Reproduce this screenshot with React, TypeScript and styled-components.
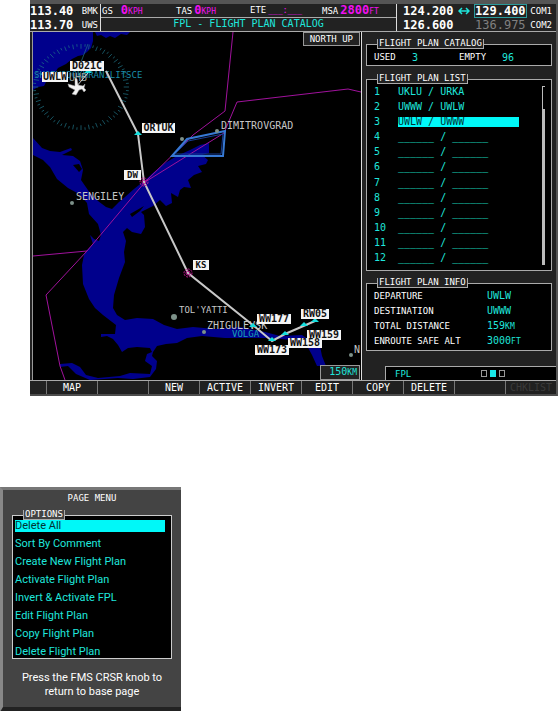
import React, { Fragment, useState } from "react";
import styled, { createGlobalStyle } from "styled-components";

const mono = `"DejaVu Sans Mono", "Liberation Mono", monospace`;
const cyan = "#1fe6dc";
const magenta = "#f010f0";

const GlobalStyle = createGlobalStyle`
  *, *::before, *::after { box-sizing: border-box; }
  body { margin: 0; background: #fff; font-family: ${mono}; }
  button { font: inherit; border: 0; padding: 0; margin: 0; cursor: pointer; }
`;

const Page = styled.main`
  display: flex;
  flex-direction: column;
  gap: 91px;
`;

const Device = styled.section`
  margin-left: 30px;
  border-top: 4px solid #555;
  border-right: 2px solid #555;
  border-bottom: 2px solid #4c4c4c;
  background: #222;
  color: #fff;
`;

const Header = styled.header`
  display: grid;
  grid-template-columns: 70px minmax(0, 1fr) 159px;
  height: 28px;
  border-bottom: 1px solid #aaa;
`;

const RadioBlock = styled.div`
  display: grid;
  grid-template-rows: 14px 13px;
  white-space: pre;
`;

const RadioRow = styled.div<{ $com?: boolean }>`
  display: flex;
  align-items: center;
  justify-content: space-between;
  padding: ${(p) => (p.$com ? "0 4px 0 6px" : "0 2px 0 0")};
`;

const Frequency = styled.span<{ $dim?: boolean; $boxed?: boolean }>`
  font-size: 12px;
  font-weight: ${(p) => (p.$dim ? 400 : 700)};
  line-height: 12px;
  color: ${(p) => (p.$dim ? "#808080" : "#fff")};
  outline: ${(p) => (p.$boxed ? "1px solid #2a9a9a" : "0")};
`;

const Station = styled.span`
  font-size: 9px;
`;

const SwapIcon = styled.svg`
  width: 12px;
  height: 8px;
`;

const StatusBlock = styled.div`
  display: grid;
  grid-template-rows: 14px 13px;
  border-left: 1px solid #ddd;
  border-right: 1px solid #ddd;
`;

const DataBar = styled.div`
  display: grid;
  grid-template-columns: 74px 74px 72px 1fr;
  padding-left: 1px;
  border-bottom: 1px solid #aaa;
`;

const Datum = styled.span<{ $wide?: boolean }>`
  display: flex;
  align-items: baseline;
  gap: ${(p) => (p.$wide ? 8 : 2)}px;
  font-size: 9px;
  line-height: 13px;
  white-space: nowrap;
`;

const Reading = styled.span`
  color: ${magenta};
  font-size: 8px;
`;

const Big = styled.span`
  font-size: 12px;
  font-weight: 700;
`;

const Title = styled.h1`
  margin: 0;
  font-size: 10px;
  font-weight: 400;
  line-height: 12px;
  text-align: center;
  color: ${cyan};
`;

const Body = styled.div`
  display: flex;
  min-height: 348px;
`;

const MapPane = styled.div`
  position: relative;
  flex: 1;
  min-width: 0;
  margin-left: 2px;
  border-left: 1px solid #999;
  border-right: 1px solid #ddd;
  background: #000;
`;

const MapDrawing = styled.svg`
  display: block;
  width: 100%;
  height: 348px;
  font-family: ${mono};
`;

const MapTag = styled.div<{ $corner: "top" | "bottom" }>`
  position: absolute;
  right: 1px;
  ${(p) => p.$corner}: 0;
  padding: ${(p) => (p.$corner === "top" ? "0 6px" : "0 2px 0 8px")};
  border: 1px solid #999;
  background: #222;
  color: ${(p) => (p.$corner === "top" ? "#fff" : cyan)};
  font-size: ${(p) => (p.$corner === "top" ? 9 : 10)}px;
  line-height: 12px;
`;

const Small = styled.small`
  font-size: 8px;
`;

const Side = styled.aside`
  display: flex;
  flex-direction: column;
  flex: 0 0 194px;
  padding-top: 7px;
`;

const Group = styled.fieldset<{ $gap?: number }>`
  margin: 0 4px ${(p) => p.$gap ?? 0}px;
  padding: 0 3px 0 7px;
  border: 1px solid #aaa;
  background: #000;
  min-width: 0;
`;

const Legend = styled.legend`
  margin-left: 3px;
  padding: 0 1px;
  border: 1px solid #aaa;
  border-top: 0;
  background: #222;
  font-size: 9px;
  line-height: 9px;
`;

const Counts = styled.dl`
  display: grid;
  grid-template-columns: 38px 47px 43px 1fr;
  align-items: center;
  margin: 0;
  height: 16px;
  font-size: 9px;
`;

const Info = styled.dl`
  display: grid;
  grid-template-columns: 113px 1fr;
  align-items: center;
  margin: 0;
  padding-bottom: 2px;
  grid-auto-rows: 15px;
  font-size: 9px;
  white-space: nowrap;
`;

const Value = styled.dd`
  margin: 0;
  color: ${cyan};
  font-size: 10px;
`;

const ListArea = styled.div`
  display: flex;
  justify-content: space-between;
  padding-bottom: 4px;
`;

const PlanTable = styled.table`
  width: 145px;
  height: 182px;
  border-collapse: collapse;
  color: ${cyan};
  font-size: 10px;
  line-height: 10px;

  th { width: 24px; padding: 0; font-weight: 400; text-align: left; }
  td { padding: 0; white-space: pre; }
`;

const PlanName = styled.span<{ $active: boolean }>`
  display: block;
  background: ${(p) => (p.$active ? "#00f8f8" : "transparent")};
  color: ${(p) => (p.$active ? "#033" : "inherit")};
`;

const ScrollTrack = styled.div`
  width: 3px;
  margin: 2px 3px 1px 0;
  padding-top: 22px;
  border-top: 1px solid #bbb;
  border-left: 1px solid #bbb;
`;

const ScrollThumb = styled.div`
  height: 100%;
  background: #bbb;
`;

const PageTab = styled.div`
  display: flex;
  align-items: center;
  margin: auto 0 0 23px;
  height: 14px;
  padding-left: 9px;
  border: 1px solid #aaa;
  border-right: 0;
  border-bottom: 0;
  background: #000;
  color: ${cyan};
  font-size: 9px;
`;

const Dots = styled.div`
  display: flex;
  gap: 3px;
  margin-left: 70px;
`;

const Dot = styled.span<{ $on?: boolean }>`
  width: 6px;
  height: 7px;
  border: 1px solid ${(p) => (p.$on ? "#19e8e8" : "#999")};
  background: ${(p) => (p.$on ? "#19e8e8" : "transparent")};
`;

const Softkeys = styled.nav`
  display: grid;
  grid-template-columns: 16px repeat(10, minmax(0, 1fr));
  height: 14px;
  border-top: 1px solid #aaa;
`;

const Softkey = styled.button`
  border-left: 1px solid #777;
  background: #202020;
  color: #fff;
  font-size: 10px;
  line-height: 12px;

  &:disabled { color: #3a3a3a; }
`;

const Menu = styled.section`
  width: 100%;
  max-width: 181px;
  padding: 3px 9px 8px;
  border-top: 3px solid #777;
  border-left: 3px solid #888;
  border-bottom: 5px solid #222;
  background: #444;
  color: #fff;
`;

const MenuTitle = styled.h2`
  margin: 0 0 7px;
  font-size: 9px;
  font-weight: 400;
  line-height: 10px;
  text-align: center;
`;

const Options = styled.fieldset`
  margin: 0;
  padding: 0 6px 0 2px;
  border: 1px solid #ccc;
  background: #000;
  min-width: 0;
`;

const OptionsLegend = styled(Legend)`
  margin-left: 8px;
  background: #444;
`;

const OptionList = styled.div`
  display: flex;
  flex-direction: column;
  gap: 6px;
`;

const Option = styled.button<{ $active: boolean }>`
  background: ${(p) => (p.$active ? "#00f8f8" : "transparent")};
  color: ${(p) => (p.$active ? "#033" : cyan)};
  font-family: Roboto, "Liberation Sans", sans-serif;
  font-size: 11px;
  line-height: 12px;
  text-align: left;
`;

const Hint = styled.p`
  margin: 12px 0 0;
  font-family: Roboto, "Liberation Sans", sans-serif;
  font-size: 11px;
  line-height: 14px;
  text-align: center;
`;

const blank = "______ / ______";
const plans = ["UKLU / URKA", "UWWW / UWLW", "UWLW / UWWW", ...Array<string>(9).fill(blank)];
const softkeys = ["MAP", "", "NEW", "ACTIVE", "INVERT", "EDIT", "COPY", "DELETE", "", "CHKLIST"];
const options = [
  "Delete All",
  "Sort By Comment",
  "Create New Flight Plan",
  "Activate Flight Plan",
  "Invert & Activate FPL",
  "Edit Flight Plan",
  "Copy Flight Plan",
  "Delete Flight Plan",
];
const info: [string, string, string][] = [
  ["DEPARTURE", "UWLW", ""],
  ["DESTINATION", "UWWW", ""],
  ["TOTAL DISTANCE", "159", "KM"],
  ["ENROUTE SAFE ALT", "3000", "FT"],
];

const waypoints = [
  { name: "D021C", x: 70, y: 61, w: 34 },
  { name: "UWLW", x: 42, y: 72, w: 26 },
  { name: "ORTUK", x: 142, y: 123, w: 33 },
  { name: "DW", x: 124, y: 170, w: 17 },
  { name: "KS", x: 193, y: 260, w: 16 },
  { name: "WW177", x: 257, y: 314, w: 34 },
  { name: "RW05", x: 301, y: 309, w: 28 },
  { name: "WW159", x: 307, y: 330, w: 34 },
  { name: "WW158", x: 288, y: 338, w: 34 },
  { name: "WW173", x: 255, y: 345, w: 34 },
];
const cities = [
  { name: "DIMITROVGRAD", x: 221, y: 129, cx: 217, cy: 131, r: 2 },
  { name: "SENGILEY", x: 76, y: 200, cx: 72, cy: 203, r: 2 },
  { name: "TOL'YATTI", x: 179, y: 313, cx: 174, cy: 317, r: 3 },
  { name: "ZHIGULEVSK", x: 207, y: 329, cx: 204, cy: 332, r: 2 },
  { name: "N", x: 354, y: 353, cx: 351, cy: 355, r: 2 },
];
const fixes = [[88, 72], [138, 134], [253, 326], [272, 340], [285, 334], [304, 325], [315, 321]];
const compassTicks = Array.from({ length: 72 }, (_, i) => {
  const a = (i * Math.PI) / 36;
  const inner = i % 2 ? 0.94 : 0.89;
  return `M${81 + 48 * Math.cos(a)} ${87 + 43 * Math.sin(a)}L${81 + 48 * inner * Math.cos(a)} ${87 + 43 * inner * Math.sin(a)}`;
}).join("");

function MovingMap() {
  return (
    <MapDrawing viewBox="33 32 328 348" preserveAspectRatio="xMidYMid slice" role="img" aria-label="Flight plan map">
      <g fill="#00008c">
        <path d="M33 32H93V41L91 48 87 52 83 55 78 56 72 59 66 64 58 68 54 74 47 80 44 86 38 87 33 90Z" />
        <path d="M95 32H130L127 35 121 34 115 38 110 36 106 38 101 35 97 36Z" />
        <path
          fillRule="evenodd"
          d="M33 138L42 148 50 151 60 152 71 148 72 150 62 155 73 156 80 161 83 170 81 180 90 193 98 201 106 207 112 209 119 202 125 197 134 189 144 181 154 172 165 163 177 156 190 150 200 145 209 143V153L202 155 208 160 206 164 198 166 202 172 194 175 188 180 191 188 184 187 180 190 178 197 171 193 172 203 166 206 160 200 153 206 141 212 144 215 145 227 141 234 132 232 127 228 123 232 126 241 124 252 125 262 119 278 114 295 113 308 117 315 125 320 137 318 153 319 164 325 177 329 193 327 215 329 240 327 265 332 280 336 302 335 312 342 320 346 322 356 326 366H317L312 355 306 344 292 340 270 338 245 338 225 338 202 336 187 338 177 343 166 344 157 346 153 352 152 356 157 361 156 369 150 377 133 379 118 378 90 380 76 374 68 366 60 367V364L72 363 80 367 86 375 98 378 120 376 130 373 150 374 152 366 145 361 147 354 152 352 150 348 137 347 128 348 122 352 118 345 113 339 107 336 101 337V334L115 334 116 325 103 315 95 308 89 299 83 284 82 265 84 255 87 250 93 244 90 235 94 239 99 241 101 235 98 224 89 214 87 203 79 194 68 188 57 179 50 167 43 160 33 155ZM73 165L79 172 82 169 79 164ZM130 214L144 206 140 211 132 217Z"
        />
      </g>
      <g fill="none" stroke="#1f7486" strokeWidth="1">
        <path d={compassTicks} strokeWidth=".7" />
        <path d="M81 62L88 44" strokeWidth=".7" />
      </g>
      <text x="34" y="78" fontSize="9" fill="#198aa9">SKOEVODOKHRANILITSCE</text>
      <text x="232" y="337" fontSize="9" fill="#17a1b4">VOLGA</text>
      <g fill="none" stroke="#a0129c" strokeWidth="1">
        <path d="M233 32L225 111 193 135 145 182 87 251 46 295 60 366 65 380" />
        <path d="M33 256L87 251M145 182L224 133 237 102 348 89 361 92" />
      </g>
      <path d="M172 156L187 139 225 131 223 156Z" fill="none" stroke="#3679d4" strokeWidth="2" />
      <path d="M175 154L188 141 223 134 221 154Z" fill="none" stroke="#173b91" strokeWidth="1" />
      {cities.map((c) => (
        <Fragment key={c.name}>
          <circle cx={c.cx} cy={c.cy} r={c.r} fill="#7d9189" />
          <text x={c.x} y={c.y} fontSize={c.name === "TOL'YATTI" ? 9 : 10} fill="#c6c6c6">{c.name}</text>
        </Fragment>
      ))}
      <circle cx="182" cy="139" r="2" fill="#7d9189" />
      <text x="69" y="81" fontSize="10" fill="#9ba5a3">UHB</text>
      <path d="M106 71L138 134 144 182 188 273 254 326 272 341 285 334 315 321" fill="none" stroke="#c8c8c8" strokeWidth="2" />
      <path d="M76 87L88 73" stroke="#d0d0d0" strokeWidth="1" />
      {fixes.map(([x, y]) => (
        <path key={x} d={`M${x - 4} ${y + 1}L${x} ${y - 3} ${x + 4} ${y + 1}Z`} fill="#15dede" />
      ))}
      {[[144, 182], [188, 273]].map(([x, y]) => (
        <g key={x} fill="none" stroke="#c0158f">
          <circle cx={x} cy={y} r="4" strokeDasharray="2 1" />
          <circle cx={x} cy={y} r="2" />
        </g>
      ))}
      <path d="M75 78L77 79 78 85 83 86 85 84 84 88 86 90 84 92 82 89 79 90 76 95 72 94 75 90 69 87 68 84 75 86Z" fill="#f2f2f2" stroke="#a9a9a9" strokeWidth=".5" />
      {waypoints.map((w) => (
        <g key={w.name}>
          <rect x={w.x} y={w.y} width={w.w} height="10" fill="#f5f5f5" />
          <text x={w.x + w.w / 2} y={w.y + 8} fontSize={w.w > 17 ? 10 : 9} fontWeight="700" textAnchor="middle" fill="#111">{w.name}</text>
        </g>
      ))}
    </MapDrawing>
  );
}

export default function App() {
  const [option, setOption] = useState(0);
  return (
    <>
      <GlobalStyle />
      <Page>
        <Device>
          <Header>
            <RadioBlock>
              <RadioRow><Frequency>113.40</Frequency><Station>BMK</Station></RadioRow>
              <RadioRow><Frequency>113.70</Frequency><Station>UWS</Station></RadioRow>
            </RadioBlock>
            <StatusBlock>
              <DataBar>
                <Datum $wide>GS<Reading><Big>0</Big>KPH</Reading></Datum>
                <Datum>TAS<Reading><Big>0</Big>KPH</Reading></Datum>
                <Datum>ETE<Reading>___:___</Reading></Datum>
                <Datum>MSA<Reading><Big>2800</Big>FT</Reading></Datum>
              </DataBar>
              <Title>FPL - FLIGHT PLAN CATALOG</Title>
            </StatusBlock>
            <RadioBlock>
              <RadioRow $com>
                <Frequency>124.200</Frequency>
                <SwapIcon viewBox="0 0 12 8" aria-hidden="true">
                  <path d="M1 4H11M4 1L1 4 4 7M8 1L11 4 8 7" fill="none" stroke={cyan} strokeWidth="1.5" />
                </SwapIcon>
                <Frequency $boxed>129.400</Frequency>
                <Station>COM1</Station>
              </RadioRow>
              <RadioRow $com>
                <Frequency>126.600</Frequency>
                <SwapIcon aria-hidden="true" />
                <Frequency $dim>136.975</Frequency>
                <Station>COM2</Station>
              </RadioRow>
            </RadioBlock>
          </Header>
          <Body>
            <MapPane>
              <MovingMap />
              <MapTag $corner="top">NORTH UP</MapTag>
              <MapTag $corner="bottom">150<Small>KM</Small></MapTag>
            </MapPane>
            <Side>
              <Group $gap={8}>
                <Legend>FLIGHT PLAN CATALOG</Legend>
                <Counts>
                  <dt>USED</dt><Value>3</Value>
                  <dt>EMPTY</dt><Value>96</Value>
                </Counts>
              </Group>
              <Group $gap={7}>
                <Legend>FLIGHT PLAN LIST</Legend>
                <ListArea>
                  <PlanTable>
                    <tbody>
                      {plans.map((plan, i) => (
                        <tr key={i}>
                          <th scope="row">{i + 1}</th>
                          <td><PlanName $active={i === 2}>{plan}</PlanName></td>
                        </tr>
                      ))}
                    </tbody>
                  </PlanTable>
                  <ScrollTrack><ScrollThumb /></ScrollTrack>
                </ListArea>
              </Group>
              <Group>
                <Legend>FLIGHT PLAN INFO</Legend>
                <Info>
                  {info.map(([label, value, unit]) => (
                    <Fragment key={label}>
                      <dt>{label}</dt>
                      <Value>{value}<Small>{unit}</Small></Value>
                    </Fragment>
                  ))}
                </Info>
              </Group>
              <PageTab>
                FPL
                <Dots><Dot /><Dot $on /><Dot /></Dots>
              </PageTab>
            </Side>
          </Body>
          <Softkeys aria-label="Softkeys">
            <span />
            {softkeys.map((key, i) => (
              <Softkey key={i} type="button" disabled={key === "" || key === "CHKLIST"}>{key}</Softkey>
            ))}
          </Softkeys>
        </Device>
        <Menu>
          <MenuTitle>PAGE MENU</MenuTitle>
          <Options>
            <OptionsLegend>OPTIONS</OptionsLegend>
            <OptionList>
              {options.map((label, i) => (
                <Option key={label} type="button" $active={i === option} onClick={() => setOption(i)}>{label}</Option>
              ))}
            </OptionList>
          </Options>
          <Hint>Press the FMS CRSR knob to return to base page</Hint>
        </Menu>
      </Page>
    </>
  );
}
